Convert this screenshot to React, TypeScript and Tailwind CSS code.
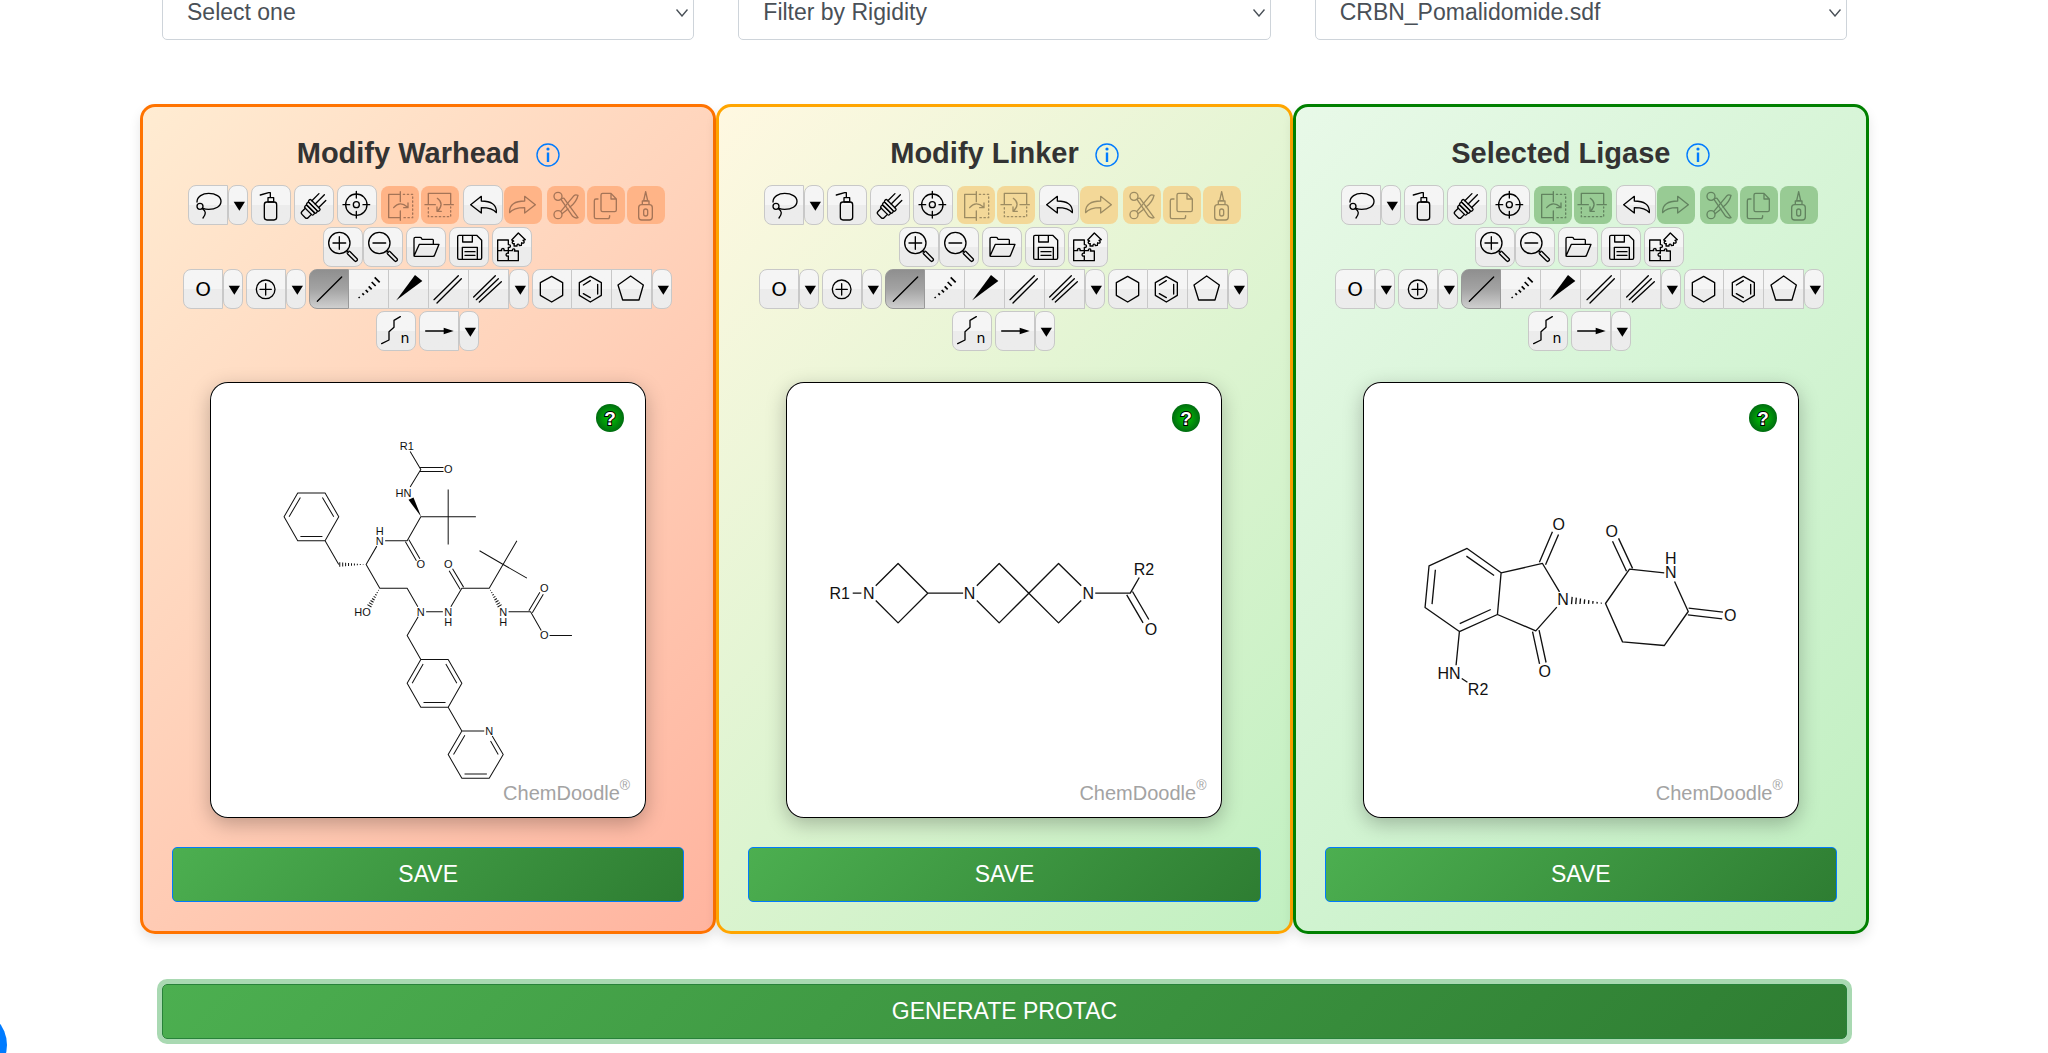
import React from 'react';

type Shape = 'full' | 'left' | 'mid';
type ThemeName = 'warhead' | 'linker' | 'ligase';
type Pt = [number, number];

const ink = { fill: 'none', stroke: '#000', strokeWidth: 4, strokeLinecap: 'round', strokeLinejoin: 'round' } as const;

/* Toolbar icons, each drawn on a 120-unit square */
const magnifier = (
  <>
    <circle cx="49" cy="48" r="32" />
    <path d="M78 78 L98 98" strokeWidth="14" />
    <path d="M77 77 L98 98" stroke="#eee" strokeWidth="6" />
    <path d="M71 71 L76 76" />
    <path d="M30 48 H68" />
  </>
);
const undoArrow = <path d="M23 59 L55 34 V48 C83 48 102 58 100 83 C90 70 76 68 55 68 V84 Z" />;

const icons: Record<string, React.ReactNode> = {
  Lasso: (
    <>
      <path d="M27 51 C27 35 44 25 62 25 C83 25 99 35 99 49 C99 64 83 73 62 73 C56 73 50 72 45 70" />
      <circle cx="36" cy="64" r="9" />
      <path d="M43 71 C55 78 54 88 45 99" />
    </>
  ),
  Clear: (
    <>
      <path d="M28 30 L53 23 H58 V37" />
      <rect x="51" y="38" width="17" height="13" />
      <rect x="40" y="51" width="37" height="54" rx="8" />
    </>
  ),
  Erase: (
    <g transform="translate(60 62) rotate(-45)">
      <path d="M6 -15 H36 M6 -1 H45 M6 14 H36" />
      <rect x="-4" y="-22" width="10" height="44" rx="4" />
      <rect x="-14" y="-20" width="10" height="40" rx="4" />
      <rect x="-24" y="-18" width="10" height="36" rx="4" />
      <path d="M-24 -13 H-38 Q-44 -13 -44 -7 V7 Q-44 13 -38 13 H-24" />
    </g>
  ),
  Center: (
    <>
      <circle cx="58" cy="59" r="32" />
      <circle cx="58" cy="59" r="9" />
      <path d="M58 19 V39 M58 79 V99 M18 59 H38 M78 59 H98" />
    </>
  ),
  'Flip horizontally': (
    <>
      <path d="M60 28 H26 V98 H60 M61 20 V50 M61 78 V106 M41 68 Q60 46 82 66 M84 54 V68 H71" />
      <path d="M70 28 H98 V98 H66" strokeDasharray="4 8" />
    </>
  ),
  'Flip vertically': (
    <>
      <path d="M25 59 V25 H92 V59 M15 59 H46 M72 59 H100 M52 40 Q74 56 53 78 M51 66 V79 H64" />
      <path d="M25 68 V95 H92 V66" strokeDasharray="4 8" />
    </>
  ),
  Undo: undoArrow,
  Redo: <g transform="translate(120 0) scale(-1 1)">{undoArrow}</g>,
  Cut: (
    <>
      <circle cx="36" cy="34" r="12" />
      <circle cx="36" cy="89" r="12" />
      <path d="M45 43 L80 94 Q87 101 96 98 L54 40 Q50 38 46 42" />
      <path d="M44 80 L84 32 Q88 28 96 31 Q92 50 72 66 M66 72 L48 86" />
    </>
  ),
  Copy: (
    <>
      <path d="M50 25 H75 L91 42 V75 Q91 80 86 80 H50 Q45 80 45 75 V30 Q45 25 50 25 Z M75 25 V42 H91" />
      <path d="M36 42 H30 Q25 42 25 47 V96 Q25 101 30 101 H66 Q71 101 71 92" />
    </>
  ),
  Paste: (
    <>
      <path d="M59 20 L53 47 H65 Z M49 58 V48 H69 V58" />
      <rect x="38" y="59" width="41" height="46" rx="9" />
      <rect x="53" y="72" width="12" height="21" rx="6" />
    </>
  ),
  'Zoom in': (
    <>
      {magnifier}
      <path d="M49 29 V67" />
    </>
  ),
  'Zoom out': magnifier,
  Open: (
    <path d="M24 86 V35 Q24 31 28 31 H43 Q46 31 48 37 H80 Q82 37 82 40 V52 M24 87 L40 52 H99 L86 84 Q85 88 81 88 H27 Q24 88 24 86" />
  ),
  Save: (
    <>
      <path d="M30 25 H83 L98 40 V93 Q98 97 94 97 H30 Q26 97 26 93 V29 Q26 25 30 25 Z M41 26 V45 H70 V26 M40 97 V61 H85 V97" />
      <path d="M48 74 H78 M48 85 H78" />
    </>
  ),
  Search: (
    <>
      <path d="M49 52 V39 H17 V101 H79 V72 H67 C72 65 60 63 61 71 H49 V61 C57 64 58 51 49 53 M17 71 H29 C25 63 39 62 36 71 H49 V79 C40 76 40 90 49 87 V101" />
      <path d="M79 18 L100 38 L93 40 C100 44 95 52 89 47 L88 55 L82 56 C82 49 74 50 75 57 L66 57 L67 50 C60 52 58 43 65 42 L59 39 Z" />
    </>
  ),
  Carbon: (
    <text x="60" y="82" textAnchor="middle" fill="#000" stroke="none" fontSize="60" fontFamily="DejaVu Sans, sans-serif">
      O
    </text>
  ),
  Charge: (
    <>
      <circle cx="59" cy="61" r="28" />
      <path d="M59 44 V78 M42 61 H76" />
    </>
  ),
  'Single bond': <path d="M25 97 L98 24" />,
  'Recessed bond': (
    <path
      strokeWidth="5"
      strokeLinecap="butt"
      d="M32 84 L35 87 M43 73 L48 78 M53 63 L60 70 M62 52 L71 61 M71 39 L83 51 M80 25 L95 40"
    />
  ),
  'Protruding bond': <path fill="#000" stroke="none" d="M25 94 L81 18 L103 36 Z" />,
  'Double bond': <path d="M18 92 L91 20 M27 102 L100 29" />,
  'Triple bond': <path d="M17 84 L82 20 M25 92 L91 29 M34 99 L100 38" />,
  'Cyclohexane ring': <path d="M59 22 L92 41 V79 L59 99 L25 79 V41 Z" />,
  'Benzene ring': <path d="M58 22 L91 41 V79 L58 99 L25 79 V41 Z M80 46 V75 M37 48 L58 35 M37 74 L58 86" />,
  'Cyclopentane ring': <path d="M59 21 L97 48 L84 93 H35 L21 48 Z" />,
  'Carbon chain': (
    <>
      <path d="M73 17 L54 28 V49 L39 62 V87 L17 98" />
      <text x="87" y="95" textAnchor="middle" fill="#000" stroke="none" fontSize="42" fontFamily="DejaVu Sans, sans-serif">
        n
      </text>
    </>
  ),
  'Synthetic arrow': (
    <>
      <path d="M20 60 H80" />
      <path fill="#000" stroke="none" d="M74 50 L104 60 L74 70 Z" />
    </>
  ),
};

const shapeClass: Record<Shape, string> = {
  full: 'rounded-lg border',
  left: 'rounded-l-lg border',
  mid: 'border border-l-0',
};
const disabledClass: Record<ThemeName, string> = {
  warhead: 'bg-[#ffb487]',
  linker: 'bg-[#f3d898]',
  ligase: 'bg-[#98cb94]',
};

function Tool({
  name,
  shape = 'full',
  off,
  active,
}: {
  name: string;
  shape?: Shape;
  off?: ThemeName;
  active?: boolean;
}) {
  const face = off
    ? `${disabledClass[off]} m-px size-[38px] rounded-lg`
    : active
      ? 'size-10 rounded-l-lg border border-[#999] bg-linear-to-b from-[#8f8f8f] via-[#a3a3a3] to-[#cfcfcf]'
      : `${shapeClass[shape]} size-10 border-[#c8c8c8] bg-linear-to-b from-[#f5f5f5] from-50% to-[#ececec] to-50%`;
  return (
    <button type="button" aria-label={name} disabled={!!off} className={`flex items-center justify-center ${face}`}>
      <svg viewBox="0 0 120 120" className={`size-10 shrink-0 ${off ? 'opacity-35' : ''}`} {...ink}>
        {icons[name]}
      </svg>
    </button>
  );
}

function Caret({ name }: { name: string }) {
  return (
    <button
      type="button"
      aria-label={name}
      className="flex h-10 w-5 items-center justify-center rounded-lg border border-[#c8c8c8] bg-linear-to-b from-[#f5f5f5] from-50% to-[#ececec] to-50%"
    >
      <svg viewBox="0 0 60 120" className="h-10 w-5 shrink-0">
        <path d="M17 50 H51 L34 77 Z" />
      </svg>
    </button>
  );
}

const Group = ({ children }: { children: React.ReactNode }) => <div className="flex">{children}</div>;

function Toolbar({ theme }: { theme: ThemeName }) {
  const row = 'flex flex-wrap justify-center gap-[3px]';
  return (
    <div className="mt-3.5 flex flex-col gap-0.5 pr-0.5">
      <div className={row}>
        <Group>
          <Tool name="Lasso" shape="left" />
          <Caret name="Selection tools" />
        </Group>
        <Tool name="Clear" />
        <Tool name="Erase" />
        <Tool name="Center" />
        <Group>
          <Tool name="Flip horizontally" off={theme} />
          <Tool name="Flip vertically" off={theme} />
        </Group>
        <Group>
          <Tool name="Undo" />
          <Tool name="Redo" off={theme} />
        </Group>
        <Group>
          <Tool name="Cut" off={theme} />
          <Tool name="Copy" off={theme} />
          <Tool name="Paste" off={theme} />
        </Group>
      </div>
      <div className={row}>
        <Group>
          <Tool name="Zoom in" />
          <Tool name="Zoom out" />
        </Group>
        <Tool name="Open" />
        <Tool name="Save" />
        <Tool name="Search" />
      </div>
      <div className={row}>
        <Group>
          <Tool name="Carbon" shape="left" />
          <Caret name="More elements" />
        </Group>
        <Group>
          <Tool name="Charge" shape="left" />
          <Caret name="More attributes" />
        </Group>
        <Group>
          <Tool name="Single bond" active />
          <Tool name="Recessed bond" shape="mid" />
          <Tool name="Protruding bond" shape="mid" />
          <Tool name="Double bond" shape="mid" />
          <Tool name="Triple bond" shape="mid" />
          <Caret name="More bonds" />
        </Group>
        <Group>
          <Tool name="Cyclohexane ring" shape="left" />
          <Tool name="Benzene ring" shape="mid" />
          <Tool name="Cyclopentane ring" shape="mid" />
          <Caret name="More rings" />
        </Group>
      </div>
      <div className={row}>
        <Tool name="Carbon chain" />
        <Group>
          <Tool name="Synthetic arrow" shape="left" />
          <Caret name="More shapes" />
        </Group>
      </div>
    </div>
  );
}

/* Molecule drawing helpers: three units to one pixel */
function parallel([x1, y1]: Pt, [x2, y2]: Pt, off: number) {
  const len = Math.hypot(x2 - x1, y2 - y1);
  const nx = (-(y2 - y1) / len) * off;
  const ny = ((x2 - x1) / len) * off;
  return `M${x1 + nx} ${y1 + ny} L${x2 + nx} ${y2 + ny} M${x1 - nx} ${y1 - ny} L${x2 - nx} ${y2 - ny} `;
}

function hashed([x1, y1]: Pt, [x2, y2]: Pt, count: number, half: number) {
  const len = Math.hypot(x2 - x1, y2 - y1);
  let d = '';
  for (let i = 1; i <= count; i++) {
    const t = i / count;
    const x = x1 + (x2 - x1) * t;
    const y = y1 + (y2 - y1) * t;
    const nx = (-(y2 - y1) / len) * half * t;
    const ny = ((x2 - x1) / len) * half * t;
    d += `M${x + nx} ${y + ny} L${x - nx} ${y - ny} `;
  }
  return d;
}

interface Molecule {
  view: string;
  fontSize: number;
  width: number;
  bonds: string;
  solid?: string;
  labels: [string, number, number][];
}

const warhead: Molecule = {
  view: '31 39 1307 1307',
  fontSize: 33,
  width: 3,
  bonds:
    'M631 247 L663 301 L631 354 M745 361 V526 M828 443 H663 L622 515 H556 M531 531 L499 586 L540 657 H622 L654 713 ' +
    'M417 586 L376 515 H294 L253 443 L294 372 H376 L417 443 L376 515 M368 502 H302 M268 443 L302 385 M368 385 L402 443 ' +
    'M679 728 H729 M753 713 L786 657 H868 L951 515 M839 545 L910 586 L981 627 M926 728 H992 L1024 784 M1049 799 H1116 ' +
    'M655 743 L622 799 L663 871 H745 L786 942 L745 1014 H663 L622 942 L663 871 M670 884 L637 942 M738 884 L771 942 M671 1000 H737 ' +
    'M745 1014 L786 1085 H853 M877 1100 L910 1156 L868 1227 H786 L745 1156 L786 1085 M795 1098 L761 1156 M872 1115 L895 1156 M794 1214 H861 ' +
    parallel([661, 301], [731, 301], 6) +
    parallel([622, 515], [655, 572], 6) +
    parallel([786, 657], [753, 602], 6) +
    parallel([992, 728], [1025, 672], 6) +
    hashed([499, 586], [420, 586], 9, 7) +
    hashed([540, 657], [509, 710], 8, 7) +
    hashed([868, 657], [899, 710], 8, 7),
  solid: 'M626 392 L641 385 L664 443 Z',
  labels: [
    ['R1', 621, 230],
    ['O', 745, 301],
    ['HN', 611, 373],
    ['H', 540, 486],
    ['N', 540, 515],
    ['O', 663, 586],
    ['HO', 488, 728],
    ['N', 663, 728],
    ['N', 745, 728],
    ['H', 745, 758],
    ['O', 745, 586],
    ['N', 910, 728],
    ['H', 910, 758],
    ['O', 1033, 657],
    ['O', 1033, 799],
    ['N', 868, 1085],
  ],
};

const linker: Molecule = {
  view: '20 39 1307 1307',
  fontSize: 48,
  width: 4,
  bonds:
    'M220 672 H246 M289 650 L356 583 L445 672 L356 761 L289 694 M445 672 H551 M592 650 L659 583 L748 672 L659 761 L592 694 ' +
    'M905 650 L837 583 L748 672 L837 761 L905 694 M947 672 H1052 L1079 625 ' +
    parallel([1050, 672], [1099, 756], 10),
  labels: [
    ['R1', 181, 672],
    ['N', 268, 672],
    ['N', 570, 672],
    ['N', 926, 672],
    ['R2', 1093, 600],
    ['O', 1114, 780],
  ],
};

const ligase: Molecule = {
  view: '39 39 1307 1307',
  fontSize: 48,
  width: 4,
  bonds:
    'M351 538 L237 590 L225 715 L328 787 L442 736 L453 611 Z M349 561 L432 619 M256 602 L246 705 M329 763 L422 721 ' +
    'M453 611 L577 583 L628 668 M442 736 L557 785 L620 714 M942 611 L838 600 L766 703 L817 818 L942 829 L1014 727 L973 637 ' +
    'M328 787 L318 888 M335 928 L352 939 ' +
    parallel([577, 583], [616, 492], 10) +
    parallel([557, 785], [578, 882], 10) +
    parallel([838, 602], [796, 512], 10) +
    parallel([1014, 727], [1117, 739], 10) +
    hashed([766, 703], [665, 694], 8, 11),
  labels: [
    ['O', 626, 466],
    ['O', 584, 906],
    ['N', 639, 690],
    ['O', 785, 486],
    ['H', 962, 568],
    ['N', 962, 611],
    ['O', 1140, 738],
    ['HN', 297, 912],
    ['R2', 384, 961],
  ],
};

function Sketcher({ molecule, label }: { molecule: Molecule; label: string }) {
  return (
    <div className="relative mx-auto mt-[31px] aspect-square w-[436px] max-w-full overflow-hidden rounded-[18px] bg-white shadow-[0_6px_20px_rgba(0,0,0,0.25)] ring-1 ring-black ring-inset">
      <svg viewBox={molecule.view} role="img" aria-label={label} className="size-full">
        <path d={molecule.bonds} fill="none" stroke="#111" strokeWidth={molecule.width} strokeLinejoin="round" />
        {molecule.solid && <path d={molecule.solid} />}
        <g fontSize={molecule.fontSize} fill="#111" textAnchor="middle">
          {molecule.labels.map(([text, x, y], i) => (
            <text key={i} x={x} y={y + molecule.fontSize * 0.35}>
              {text}
            </text>
          ))}
        </g>
      </svg>
      <button type="button" aria-label="Help" className="absolute top-[22px] right-[22px] size-7">
        <svg viewBox="0 0 84 84" className="size-7">
          <defs>
            <radialGradient id="help-fill">
              <stop offset="0" stopColor="#00c800" />
              <stop offset="1" stopColor="#006c10" />
            </radialGradient>
          </defs>
          <circle cx="42" cy="42" r="42" fill="url(#help-fill)" />
          <text
            x="42"
            y="62"
            textAnchor="middle"
            fontSize="57"
            fontWeight="700"
            fill="#fff"
            stroke="#000"
            strokeWidth="6"
            paintOrder="stroke"
          >
            ?
          </text>
        </svg>
      </button>
      <div className="absolute right-4 bottom-[13px] flex items-start leading-6 text-[#a3a3a3]">
        <span className="pt-1 text-[20px]">ChemDoodle</span>
        <span className="text-[14px] leading-4">®</span>
      </div>
    </div>
  );
}

const panelClass: Record<ThemeName, string> = {
  warhead: 'border-[#ff7300] bg-linear-[135deg,#ffecd2,#ffb49f]',
  linker: 'border-[#ffa500] bg-linear-[135deg,#fff8e1,#dcf4d0_55%,#c1f0c1]',
  ligase: 'border-[#008000] bg-linear-[135deg,#e8f9e8,#c0efc0]',
};

function Panel({ theme, title, molecule }: { theme: ThemeName; title: string; molecule: Molecule }) {
  return (
    <section
      className={`flex flex-col rounded-[15px] border-3 p-[29px] shadow-[0_6px_12px_rgba(0,0,0,0.1)] ${panelClass[theme]}`}
    >
      <div className="flex items-center justify-center gap-4">
        <h2 className="text-[29px] leading-[35px] font-bold text-[#333]">{title}</h2>
        <button type="button" aria-label={`About ${title}`} className="mt-0.5">
          <svg viewBox="0 0 24 24" className="size-6" fill="none" stroke="#007bff">
            <circle cx="12" cy="12" r="11" strokeWidth="1.4" />
            <path d="M12 9.5 V19" strokeWidth="2.4" />
            <circle cx="12" cy="6" r="1.6" fill="#007bff" stroke="none" />
          </svg>
        </button>
      </div>
      <Toolbar theme={theme} />
      <Sketcher molecule={molecule} label={`${title} structure`} />
      <button
        type="button"
        className="mt-[29px] h-[55px] rounded-[5px] border border-[#007bff] bg-linear-[135deg,#4caf50,#2e7d32] text-[23px] text-white"
      >
        SAVE
      </button>
    </section>
  );
}

function Picker({ label, value }: { label: string; value: string }) {
  return (
    <div className="relative mx-[22px]">
      <select
        aria-label={label}
        defaultValue={value}
        className="h-[55px] w-full appearance-none rounded-[5px] border border-[#ced4da] bg-white px-6 text-[23px] text-[#495057]"
      >
        <option>{value}</option>
      </select>
      <svg
        viewBox="0 0 12 8"
        className="pointer-events-none absolute top-6 right-1.5 h-2 w-3"
        fill="none"
        stroke="#495057"
        strokeWidth="1.4"
      >
        <path d="M0.5 0.5 L6 7 L11.5 0.5" />
      </svg>
    </div>
  );
}

export default function App() {
  return (
    <main className="-mt-[15px] overflow-x-clip bg-white pr-[179px] pb-3 pl-[140px] font-['Liberation_Sans',Arial,sans-serif]">
      <div className="grid grid-cols-3">
        <Picker label="Warhead" value="Select one" />
        <Picker label="Linker" value="Filter by Rigidity" />
        <Picker label="Ligase" value="CRBN_Pomalidomide.sdf" />
      </div>
      <div className="mt-16 grid grid-cols-3">
        <Panel theme="warhead" title="Modify Warhead" molecule={warhead} />
        <Panel theme="linker" title="Modify Linker" molecule={linker} />
        <Panel theme="ligase" title="Selected Ligase" molecule={ligase} />
      </div>
      <div className="mx-[22px] mt-[50px] flex">
        <button
          type="button"
          className="h-[55px] flex-1 rounded-[5px] border border-[#28823a] bg-linear-[135deg,#4caf50,#2e7d32] text-[23px] text-white shadow-[0_0_0_5px_#a9d9b2]"
        >
          GENERATE PROTAC
        </button>
      </div>
      <button
        type="button"
        aria-label="Open menu"
        className="fixed bottom-[-28px] left-[-65px] size-[72px] rounded-full bg-[#007bff]"
      />
    </main>
  );
}
